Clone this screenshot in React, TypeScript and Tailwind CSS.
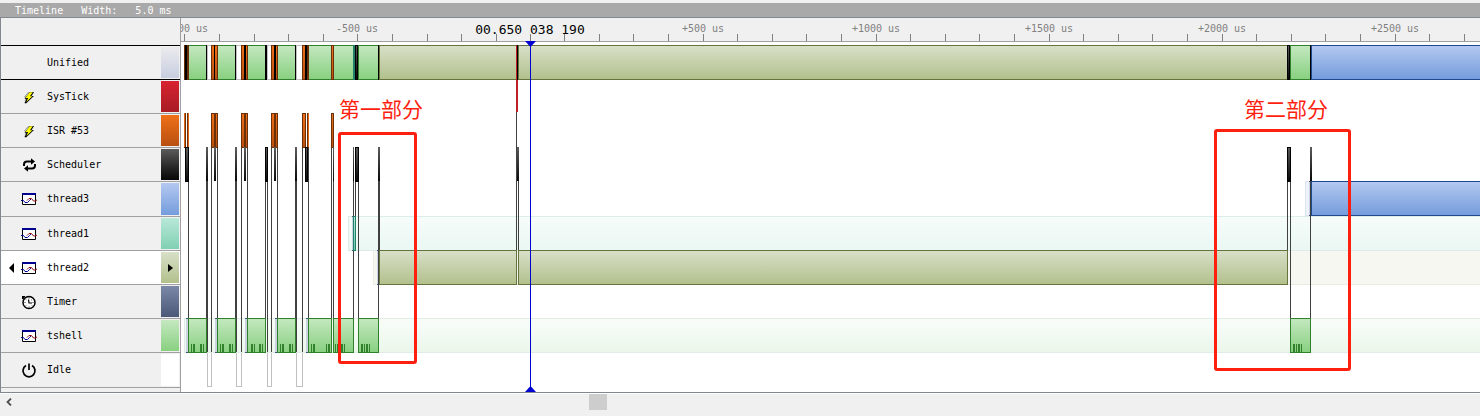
import { Fragment, type ReactNode } from "react";

type Tone = "green" | "olive" | "blue" | "teal" | "orange" | "black" | "red";

const TONES: Record<Tone, { from: string; to: string; stroke: string }> = {
  green: { from: "#c4e8c0", to: "#88d080", stroke: "#30802c" },
  olive: { from: "#d8e0c8", to: "#b2c08c", stroke: "#64743c" },
  blue: { from: "#b4c8f0", to: "#749cdc", stroke: "#20488c" },
  teal: { from: "#b8e8d8", to: "#70c8ac", stroke: "#208068" },
  orange: { from: "#f07018", to: "#b85010", stroke: "#6c3008" },
  black: { from: "#5c5c5c", to: "#080808", stroke: "#000000" },
  red: { from: "#d82430", to: "#a81c24", stroke: "#b01820" },
};

const LEFT = 181;
const TOP = 18;
const FAR = 6000;

/* ---------- icons ---------- */

function BoltIcon() {
  return (
    <svg width="16" height="16" viewBox="0 0 16 16" aria-hidden="true">
      <path d="M7.500 3 3.500 8h2.500l-2 3.500" fill="none" stroke="#a0a0a0" strokeWidth="1" />
      <path d="M8.500 3h4.500L10.500 7h2.500L5 14.500 3.500 14 5.500 9.800H3.500z" fill="#000" />
      <path d="M8.600 3.200h3.200L8.900 7.300h2.600L5.300 12.900 7.100 9H4.400z" fill="#ffff00" />
    </svg>
  );
}

function SchedulerIcon() {
  return (
    <svg width="16" height="16" viewBox="0 0 16 16" aria-hidden="true">
      <path d="M3 9V7.500Q3 4.500 6 4.500H10.500M14 7v1.500q0 3-3 3H6.500" fill="none" stroke="#000" strokeWidth="2" />
      <path d="M10 1.200v6.600l4-3.300zM7 8.200v6.600L3 11.500z" fill="#000" />
    </svg>
  );
}

function ThreadIcon() {
  return (
    <svg width="16" height="16" viewBox="0 0 16 16" aria-hidden="true">
      <path d="M1.500 2.500h13v11h-13z" fill="#fff" stroke="#000" />
      <path d="M1 2h14v2H1z" fill="#000090" />
      <path d="M0 9.500h2.500l1.500 2h2.500L8.500 9.500 10 8" fill="none" stroke="#000090" strokeWidth="1" />
      <path d="M6 9.500 8 7.500h2.500l2 2.500h1.500l2-1" fill="none" stroke="#901010" strokeWidth="1" />
    </svg>
  );
}

function TimerIcon() {
  return (
    <svg width="16" height="16" viewBox="0 0 16 16" aria-hidden="true">
      <circle cx="8" cy="8.500" r="6" fill="#fff" stroke="#000" strokeWidth="1.500" />
      <path d="M1 2h3.500L2.500 5H1z" fill="#000" />
      <path d="M7.500 5.500 8 9h3" fill="none" stroke="#000" strokeWidth="1.200" />
      <path d="M8 3.500v1M8 12.500v1M3.500 8.500h1M11.500 8.500h1M5 5.500l.6.6M11 5.500l-.6.6M5 11.500l.6-.6M11 11.500l-.6-.6" stroke="#000" strokeWidth=".8" />
    </svg>
  );
}

function PowerIcon() {
  return (
    <svg width="16" height="16" viewBox="0 0 16 16" aria-hidden="true">
      <path d="M5 3.600a6 6 0 1 0 6 0" fill="none" stroke="#000" strokeWidth="1.700" />
      <path d="M8 1.500V8" stroke="#000" strokeWidth="1.700" />
    </svg>
  );
}

/* ---------- context list ---------- */

type Row = {
  name: string;
  icon?: ReactNode;
  swatch: string;
  size: string;
  selected?: boolean;
};

const ROWS: Row[] = [
  { name: "Unified", swatch: "from-[#ebebee] to-[#c8cee0]", size: "h-[34px] border-black" },
  { name: "SysTick", icon: <BoltIcon />, swatch: "from-[#d82430] to-[#a81c24]", size: "h-[34px] border-[#a0a0a0]" },
  { name: "ISR #53", icon: <BoltIcon />, swatch: "from-[#f07018] to-[#b85010]", size: "h-[34px] border-[#a0a0a0]" },
  { name: "Scheduler", icon: <SchedulerIcon />, swatch: "from-[#5c5c5c] to-[#080808]", size: "h-[34px] border-[#a0a0a0]" },
  { name: "thread3", icon: <ThreadIcon />, swatch: "from-[#b4c8f0] to-[#749cdc]", size: "h-[35px] border-[#a0a0a0]" },
  { name: "thread1", icon: <ThreadIcon />, swatch: "from-[#b8e8d8] to-[#80d0b4]", size: "h-[34px] border-[#a0a0a0]" },
  { name: "thread2", icon: <ThreadIcon />, swatch: "from-[#d8e0c8] to-[#b2c08c]", size: "h-[34px] border-[#a0a0a0]", selected: true },
  { name: "Timer", icon: <TimerIcon />, swatch: "from-[#7c88a8] to-[#4c5878]", size: "h-[34px] border-[#a0a0a0]" },
  { name: "tshell", icon: <ThreadIcon />, swatch: "from-[#c4e8c0] to-[#88d080]", size: "h-[34px] border-[#a0a0a0]" },
  { name: "Idle", icon: <PowerIcon />, swatch: "from-white to-white", size: "h-[35px] border-[#a0a0a0]" },
];

function ContextList() {
  return (
    <ul className="w-[181px] shrink-0 border-l border-r border-l-[#828790] border-r-[#a0a0a0] bg-[#f0f0f0] pt-[27px]">
      <li aria-hidden="true" className="h-px bg-black" />
      {ROWS.map((row) => (
        <li
          key={row.name}
          className={`flex items-center border-b pr-px ${row.size} ${row.selected ? "bg-white" : ""}`}
        >
          <span className="flex w-5 justify-end pr-1.5">
            {row.selected && (
              <svg width="6" height="10" viewBox="0 0 6 10" aria-hidden="true">
                <path d="M5 0v10L0 5z" fill="#000" />
              </svg>
            )}
          </span>
          <span className="w-4">{row.icon}</span>
          <span className="grow pl-[10px] text-black">{row.name}</span>
          <span className={`my-px flex w-[18px] items-center justify-center self-stretch bg-linear-to-b ${row.swatch}`}>
            {row.selected && (
              <svg width="5" height="10" viewBox="0 0 5 10" aria-hidden="true">
                <path d="M0 1v8l5-4z" fill="#000" />
              </svg>
            )}
          </span>
        </li>
      ))}
    </ul>
  );
}

/* ---------- chart data (first x, last x) ---------- */

type Span = [number, number];
type ToneSpan = [number, number, Tone];

const UNIFIED: ToneSpan[] = [
  [188, 206, "green"], [184, 185, "orange"], [187, 188, "orange"], [185, 186, "black"], [206, 206, "black"],
  [217, 235, "green"], [211, 214, "orange"], [214, 217, "orange"], [214, 214, "black"], [235, 235, "black"],
  [247, 265, "green"], [241, 244, "orange"], [244, 247, "orange"], [244, 245, "black"], [265, 266, "black"],
  [277, 295, "green"], [271, 274, "orange"], [274, 277, "orange"], [274, 275, "black"], [295, 295, "black"],
  [308, 331, "green"], [302, 305, "orange"], [307, 308, "orange"], [305, 306, "black"],
  [333, 353, "green"], [331, 333, "orange"], [353, 354, "teal"], [358, 378, "green"], [355, 357, "black"],
  [379, 516, "olive"], [378, 378, "black"], [518, 1287, "olive"], [517, 517, "black"],
  [1290, 1310, "green"], [1287, 1289, "black"], [1311, FAR, "blue"], [1310, 1310, "black"],
];

const ISR: Span[] = [
  [184, 185], [187, 188], [211, 214], [215, 217], [241, 244], [245, 247],
  [271, 274], [275, 277], [302, 305], [307, 308], [331, 333],
];

const SCHEDULER: Span[] = [
  [185, 188], [206, 207], [214, 215], [235, 236], [244, 245], [265, 267], [274, 275], [295, 296],
  [305, 307], [333, 333], [353, 353], [355, 358], [378, 379], [517, 518], [1287, 1290], [1310, 1311],
];

const TSHELL: Span[] = [
  [188, 206], [217, 235], [247, 265], [277, 295], [308, 331], [333, 353], [358, 378], [1290, 1310],
];

const IDLE: Span[] = [[207, 211], [236, 241], [267, 271], [296, 302]];

/* x, top, bottom */
const SWITCHES: [number, number, number][] = [
  [188, 147, 318], [206, 181, 318], [207, 181, 352], [211, 147, 352], [217, 147, 318],
  [235, 181, 318], [236, 181, 352], [241, 147, 352], [247, 147, 318], [265, 181, 318],
  [267, 181, 352], [271, 147, 352], [277, 147, 318], [295, 181, 318], [296, 181, 352],
  [302, 147, 352], [308, 147, 318], [331, 147, 318], [333, 147, 318], [353, 181, 216],
  [353, 251, 318], [355, 181, 216], [358, 181, 318], [378, 181, 318], [379, 181, 250],
  [516, 111, 250], [518, 181, 250], [1287, 181, 250], [1290, 181, 318], [1310, 181, 318],
];

/* x, width */
const MARKS: Span[] = [
  [191, 1], [193, 2], [200, 2], [203, 1],
  [220, 1], [222, 2], [229, 2], [232, 1],
  [251, 2], [254, 1], [259, 2], [262, 1],
  [280, 1], [282, 2], [289, 2], [292, 1],
  [311, 1], [313, 2], [326, 1], [328, 2],
  [335, 1], [337, 2], [341, 2], [344, 1],
  [361, 2], [364, 1], [366, 2], [369, 1],
  [1293, 2], [1296, 1], [1298, 2], [1301, 1],
];

const CURSOR = 530;
const TICKS = Array.from({ length: 38 }, (_, i) => i - 10);

function Block({ x0, x1, y, h = 34, tone }: { x0: number; x1: number; y: number; h?: number; tone: Tone }) {
  if (x0 === x1) {
    return <rect x={x0} y={y} width="1" height={h + 1} fill={TONES[tone].stroke} />;
  }
  return (
    <rect x={x0 + 0.5} y={y + 0.5} width={x1 - x0} height={h} fill={`url(#tone-${tone})`} stroke={TONES[tone].stroke} />
  );
}

function Ghost({ x, y, from, stroke }: { x: number; y: number; from: string; stroke: string }) {
  return <rect x={x + 0.5} y={y + 0.5} width={FAR} height="34" fill={from} stroke={stroke} />;
}

/* short pale stretch in front of a block: ready, but not yet running */
function Ready({ x, w, y }: { x: number; w: number; y: number }) {
  return (
    <>
      <rect x={x} y={y} width={w} height="35" fill="#ccd4e4" />
      <path d={`M${x} ${y + 0.5}h${w}M${x} ${y + 34.5}h${w}`} stroke="#405880" />
    </>
  );
}

function Chart() {
  return (
    <svg width="100%" height="374" role="img" aria-label="Context timeline" className="block bg-white">
      <defs>
        {(Object.keys(TONES) as Tone[]).map((t) => (
          <linearGradient key={t} id={`tone-${t}`} x1="0" y1="0" x2="0" y2="1">
            <stop offset="0" stopColor={TONES[t].from} />
            <stop offset="1" stopColor={TONES[t].to} />
          </linearGradient>
        ))}
        <linearGradient id="ghost-teal" x1="0" y1="0" x2="0" y2="1">
          <stop offset="0" stopColor="#f6fcfa" />
          <stop offset="1" stopColor="#eaf7f3" />
        </linearGradient>
        <linearGradient id="ghost-green" x1="0" y1="0" x2="0" y2="1">
          <stop offset="0" stopColor="#f8fcf8" />
          <stop offset="1" stopColor="#ebf7eb" />
        </linearGradient>
      </defs>
      <g transform={`translate(${-LEFT} ${-TOP})`}>
        <rect x={LEFT} y={TOP} width={FAR} height="23" fill="#f0f0f0" />
        <path d={`M${LEFT} 41.500h${FAR}`} stroke="#a0a0a0" />
        {TICKS.map((k) => {
          const x = CURSOR + Math.trunc(k * 34.6);
          const us = k * 100;
          return (
            <Fragment key={k}>
              <path d={`M${x + 0.5} 34v7`} stroke="#808080" />
              {us !== 0 && us % 500 === 0 && (
                <text x={x} y="32" textAnchor="middle" fill="#808080">
                  {`${us > 0 ? "+" : "-"}${Math.abs(us)} us`}
                </text>
              )}
            </Fragment>
          );
        })}
        <text x={CURSOR} y="34" textAnchor="middle" fill="#000" className="text-[13px]">
          00.650 038 190
        </text>

        {IDLE.map(([a, b]) => (
          <g key={a} fill="#fff" stroke="#c0c0c0">
            <rect x={a + 0.5} y="45.500" width={b - a} height="34" />
            <rect x={a + 0.5} y="352.500" width={b - a} height="34" />
          </g>
        ))}
        {UNIFIED.map(([a, b, tone]) => (
          <Block key={`${a}-${tone}-${b}`} x0={a} x1={b} y={45} tone={tone} />
        ))}

        <Ghost x={1305} y={181} from="#eef3fb" stroke="#dce4f0" />
        <Ghost x={373} y={250} from="#f7f7f1" stroke="#ecece4" />
        <Ghost x={348} y={216} from="url(#ghost-teal)" stroke="#dcece8" />
        <Ghost x={184} y={318} from="url(#ghost-green)" stroke="#e0ece4" />

        {SWITCHES.map(([x, a, b]) => (
          <path key={x + "-" + a} d={`M${x + 0.5} ${a}V${b}`} stroke="#404040" />
        ))}
        {ISR.map(([a, b]) => (
          <Block key={a} x0={a} x1={b} y={113} tone="orange" />
        ))}
        {[184, 188, 308].map((x) => (
          <rect key={x} x={x} y="113" width="1" height="34" fill="#e06814" />
        ))}
        {SCHEDULER.map(([a, b]) =>
          b - a < 2 ? (
            <rect key={a} x={a} y="147" width={b - a + 1} height="34" fill="url(#tone-black)" />
          ) : (
            <Block key={a} x0={a} x1={b} y={147} tone="black" />
          ),
        )}
        <rect x="516" y="45" width="1" height="67" fill="#c02028" />
        <rect x="517" y="80" width="1" height="32" fill="#c02028" />

        <Ready x={1309} w={2} y={181} />
        <Block x0={1311} x1={FAR} y={181} tone="blue" />
        <Ready x={352} w={2} y={216} />
        <Block x0={353} x1={355} y={216} tone="teal" />
        <Ready x={377} w={2} y={250} />
        <Block x0={379} x1={516} y={250} tone="olive" />
        <Block x0={518} x1={1287} y={250} tone="olive" />
        {[186, 215, 245, 275, 306].map((x) => (
          <Ready key={x} x={x} w={2} y={318} />
        ))}
        {TSHELL.map(([a, b]) => (
          <Block key={a} x0={a} x1={b} y={318} tone="green" />
        ))}
        {MARKS.map(([x, w]) => (
          <rect key={x} x={x} y="344" width={w} height="8" fill="#30802c" />
        ))}
        <path d="M378.500 250v68M1310.500 181v137" stroke="#404040" />

        <path d={`M${CURSOR + 0.5} 41V392`} stroke="#0000d0" />
        <path d="M525 41h11l-5.500 6zM525 392h11l-5.500-6z" fill="#0000d0" />
      </g>
    </svg>
  );
}

/* ---------- annotations ---------- */

const NOTES = [
  { text: "第一部分", label: "left-[158px] top-[76px]", box: "left-[157px] top-[114px] h-[232px] w-[79px]" },
  { text: "第二部分", label: "left-[1063px] top-[76px]", box: "left-[1033px] top-[111px] h-[242px] w-[137px]" },
];

function Annotations() {
  return (
    <>
      {NOTES.map((n) => (
        <Fragment key={n.text}>
          <div
            className={`absolute whitespace-nowrap text-[21px] leading-7 font-normal text-[#ff1f0f] [font-family:'Noto_Sans_CJK_SC',sans-serif] ${n.label}`}
          >
            {n.text}
          </div>
          <div className={`absolute rounded-[3px] border-3 border-[#ff1f0f] ${n.box}`} />
        </Fragment>
      ))}
    </>
  );
}

export default function App() {
  return (
    <div className="min-h-screen bg-[#f0f0f0] pt-[3px] text-[10px] leading-3 [font-family:'DejaVu_Sans_Mono','Liberation_Mono',monospace]">
      <header className="flex h-[15px] items-center gap-[18px] border-b border-[#828790] bg-[#a9a9a9] pt-px pl-[15px] text-white">
        <h1>Timeline</h1>
        <p className="whitespace-pre">Width:   5.0 ms</p>
      </header>
      <main className="flex border-b border-[#828790]">
        <ContextList />
        <div className="relative min-w-0 grow overflow-hidden">
          <Chart />
          <Annotations />
        </div>
      </main>
      <footer className="flex h-[17px] items-stretch border-t border-white">
        <button type="button" aria-label="Scroll left" className="flex w-[17px] items-center justify-center">
          <svg width="6" height="8" viewBox="0 0 6 8" aria-hidden="true">
            <path d="M5 .5 1.500 4 5 7.500" fill="none" stroke="#505050" strokeWidth="1.800" />
          </svg>
        </button>
        <div className="flex grow">
          <div className="w-[39.1%]" />
          <div className="w-[18px] bg-[#cdcdcd]" />
        </div>
      </footer>
    </div>
  );
}
